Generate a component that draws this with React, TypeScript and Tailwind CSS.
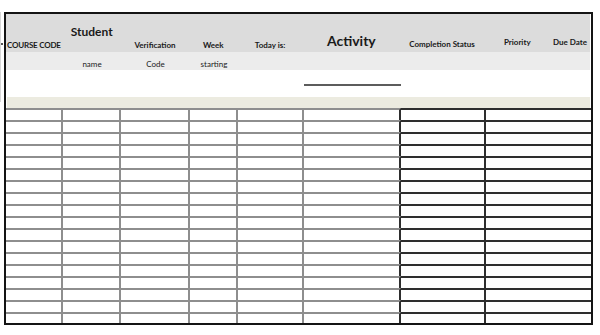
const gridCols = [
  'w-[57px] border-t-2 border-r-2 border-t-[#8e8e8e] border-r-[#8e8e8e]',
  'w-[58px] border-t-2 border-r-2 border-t-[#8e8e8e] border-r-[#8e8e8e]',
  'w-[69px] border-t-2 border-r-2 border-t-[#8e8e8e] border-r-[#8e8e8e]',
  'w-[48px] border-t-2 border-r-2 border-t-[#8e8e8e] border-r-[#8e8e8e]',
  'w-[66px] border-t-2 border-r-2 border-t-[#8e8e8e] border-r-[#8e8e8e]',
  'w-[97px] border-t-2 border-r-2 border-t-[#8e8e8e] border-r-[#2e2e2e]',
  'w-[85px] border-t-2 border-r-2 border-t-[#2e2e2e] border-r-[#2e2e2e]',
  'w-[105px] border-t-2 border-t-[#2e2e2e]',
];

const rows = Array.from({ length: 18 }, (_, i) => i);

export default function App() {
  return (
    <div className="w-[600px] h-[335px] bg-white flex items-start pt-[12px] font-['Lato',sans-serif] text-[#1a1a1a]">
      {/* clipped neighbour column */}
      <div className="w-[4px] h-[90px] border-l border-[#d6d6d6] pt-[31px]">
        <div className="w-[2px] h-[2px] bg-[#555]" />
      </div>

      <div className="w-[589px] h-[313px] border-2 border-[#141414] flex flex-col overflow-hidden">
        {/* header band */}
        <div className="h-[38px] shrink-0 bg-[#dcdcdc] mr-[1px] flex">
          <div className="w-[57px] flex items-end pb-[3px] pl-[1px]">
            <span className="text-[8px] font-bold leading-none whitespace-nowrap tracking-[-0.2px]">COURSE CODE</span>
          </div>
          <div className="w-[58px] flex items-end justify-center pb-[14px]">
            <span className="text-[12px] font-bold leading-none">Student</span>
          </div>
          <div className="w-[69px] flex items-end justify-center pb-[3px]">
            <span className="text-[8px] font-bold leading-none">Verification</span>
          </div>
          <div className="w-[48px] flex items-end justify-center pb-[3px]">
            <span className="text-[8px] font-bold leading-none">Week</span>
          </div>
          <div className="w-[66px] flex items-end justify-center pb-[3px]">
            <span className="text-[8px] font-bold leading-none">Today is:</span>
          </div>
          <div className="w-[97px] flex items-end justify-center pb-[4px]">
            <span className="text-[14px] font-bold leading-none">Activity</span>
          </div>
          <div className="w-[85px] flex items-end justify-center pb-[4px]">
            <span className="text-[8px] font-bold leading-none whitespace-nowrap">Completion Status</span>
          </div>
          <div className="w-[66px] flex items-end justify-center pb-[6px]">
            <span className="text-[8px] font-bold leading-none">Priority</span>
          </div>
          <div className="w-[40px] flex items-end justify-center pb-[6px]">
            <span className="text-[8px] font-bold leading-none whitespace-nowrap">Due Date</span>
          </div>
        </div>

        {/* sub header */}
        <div className="h-[18px] shrink-0 bg-[#ececec] mr-[1px] flex text-[8px] leading-none">
          <div className="w-[57px]" />
          <div className="w-[58px] flex items-end justify-center pb-[2px]">name</div>
          <div className="w-[69px] flex items-end justify-center pb-[2px]">Code</div>
          <div className="w-[48px] flex items-end justify-center pb-[2px]">starting</div>
        </div>

        {/* date line */}
        <div className="h-[27px] shrink-0 flex">
          <div className="w-[298px]" />
          <div className="w-[97px] pt-[14px]">
            <div className="h-[2px] bg-[#5c5c5c]" />
          </div>
        </div>

        <div className="h-[11px] shrink-0 bg-[#ecebe0] mx-[1px]" />

        {/* grid */}
        <div className="flex flex-col">
          {rows.map((r) => (
            <div key={r} className="h-[12px] shrink-0 flex">
              {gridCols.map((c, i) => (
                <div key={i} className={`${c} h-full`} />
              ))}
            </div>
          ))}
        </div>
      </div>
    </div>
  );
}
